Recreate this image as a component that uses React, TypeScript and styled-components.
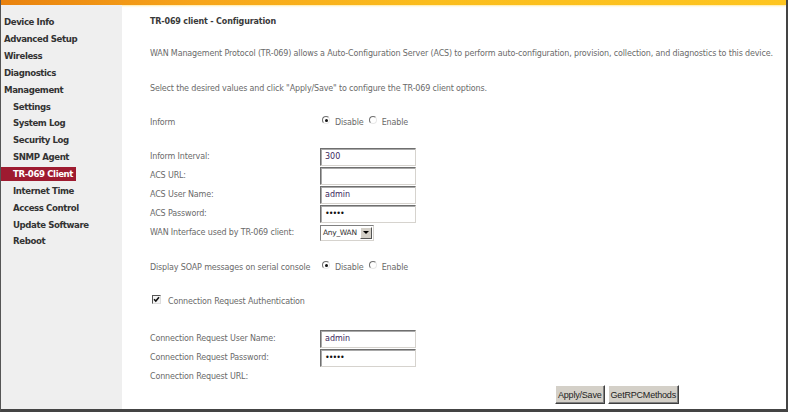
import React from 'react'
import styled, { createGlobalStyle } from 'styled-components'

const Global = createGlobalStyle`
  html, body {
    margin: 0;
    padding: 0;
    background: #fff;
  }
  * {
    box-sizing: border-box;
  }
`

const Frame = styled.div`
  width: 788px;
  height: 412px;
  display: flex;
  flex-direction: column;
  border-left: 1px solid #555;
  border-right: 2px solid #444;
  border-bottom: 3px solid #444;
  overflow: hidden;
  font-family: 'DejaVu Sans', Verdana, sans-serif;
`

const TopBar = styled.div`
  height: 5px;
  flex: none;
  background: linear-gradient(to right, #e9820f 0%, #f7a51a 25%, #fbbd1c 55%, #fec51f 100%);
  box-shadow: 0 1px 2px #ffe9a3;
`

const Body = styled.div`
  flex: 1;
  display: flex;
  min-height: 0;
`

const Sidebar = styled.nav`
  width: 121px;
  flex: none;
  background: #efefef;
  padding-top: 9px;
  display: flex;
  flex-direction: column;
`

const NavItem = styled.div<{ $sub?: boolean; $active?: boolean }>`
  height: 16.85px;
  display: flex;
  align-items: center;
  a {
    display: inline-block;
    padding: 0 3px 0 ${(p) => (p.$sub ? 12 : 3)}px;
    font-size: 8.6px;
    font-weight: bold;
    line-height: 14px;
    letter-spacing: -0.4px;
    color: ${(p) => (p.$active ? '#fff' : '#333')};
    background: ${(p) => (p.$active ? '#9e1b30' : 'transparent')};
    text-decoration: none;
    white-space: nowrap;
  }
`

const Content = styled.main`
  flex: 1;
  padding-left: 28px;
  display: flex;
  flex-direction: column;
  font-size: 8px;
  letter-spacing: -0.15px;
  color: #6a6a6a;
`

const Line = styled.div<{ $h: number; $mt: number }>`
  height: ${(p) => p.$h}px;
  margin-top: ${(p) => p.$mt}px;
  display: flex;
  align-items: center;
  white-space: nowrap;
`

const Title = styled.span`
  font-weight: bold;
  color: #3a3a3a;
`

const Label = styled.span`
  width: 170px;
  flex: none;
`

const Field = styled.input`
  width: 96px;
  height: 18px;
  padding: 0 4px;
  font-family: 'DejaVu Sans', Verdana, sans-serif;
  font-size: 8px;
  color: #3a1f5c;
  background: #fff;
  border: 1px solid;
  border-color: #6f6f6f #d6d3ce #d6d3ce #6f6f6f;
  box-shadow: inset 1px 1px 0 #a9a9a9;
  outline: none;
`

const Dots = styled(Field)`
  letter-spacing: -1px;
  font-size: 8px;
  color: #111;
`

const Select = styled.div`
  width: 54px;
  height: 16px;
  display: flex;
  align-items: center;
  border: 1px solid;
  border-color: #808080 #d6d3ce #d6d3ce #808080;
  padding-left: 2px;
  color: #333;
  font-size: 7.5px;
  letter-spacing: -0.3px;
  justify-content: space-between;
`

const Arrow = styled.span`
  width: 12px;
  height: 12px;
  margin-right: 1px;
  background: #d4d0c8;
  border: 1px solid;
  border-color: #fff #555 #555 #fff;
  display: flex;
  align-items: center;
  justify-content: center;
  &::after {
    content: '';
    border-left: 3px solid transparent;
    border-right: 3px solid transparent;
    border-top: 3px solid #000;
  }
`

const Radios = styled.span`
  display: flex;
  align-items: center;
`

const Radio = styled.span<{ $on?: boolean }>`
  width: 8px;
  height: 8px;
  margin: -4px 5px 0 ${(p) => (p.$on ? 2 : 5)}px;
  border-radius: 50%;
  border: 1px solid;
  border-color: #6f6f6f #e8e8e8 #e8e8e8 #6f6f6f;
  display: inline-flex;
  align-items: center;
  justify-content: center;
  &::after {
    content: '';
    width: 3px;
    height: 3px;
    border-radius: 50%;
    background: ${(p) => (p.$on ? '#111' : 'transparent')};
  }
`

const Check = styled.span`
  width: 9px;
  height: 9px;
  margin: -4px 7px 0 2px;
  border: 1px solid;
  border-color: #555 #ddd #ddd #555;
  background: #f4f4f4;
  display: inline-flex;
  align-items: center;
  justify-content: center;
`

const Buttons = styled.div`
  display: flex;
  gap: 3px;
  margin: 0 0 0 405px;
`

const Button = styled.button`
  height: 19px;
  padding: 0 2px;
  font-family: 'Liberation Sans', Arial, sans-serif;
  font-size: 9px;
  letter-spacing: -0.2px;
  color: #222;
  background: #d4d0c8;
  border: 1px solid;
  border-color: #fff #404040 #404040 #fff;
  box-shadow: inset -1px -1px 0 #808080;
`

const nav = [
  { t: 'Device Info' },
  { t: 'Advanced Setup' },
  { t: 'Wireless' },
  { t: 'Diagnostics' },
  { t: 'Management' },
  { t: 'Settings', sub: true },
  { t: 'System Log', sub: true },
  { t: 'Security Log', sub: true },
  { t: 'SNMP Agent', sub: true },
  { t: 'TR-069 Client', sub: true, active: true },
  { t: 'Internet Time', sub: true },
  { t: 'Access Control', sub: true },
  { t: 'Update Software', sub: true },
  { t: 'Reboot', sub: true },
]

const RadioPair = () => (
  <Radios>
    <Radio $on />
    Disable
    <Radio />
    Enable
  </Radios>
)

export default function App() {
  return (
    <>
      <Global />
      <Frame>
        <TopBar />
        <Body>
          <Sidebar>
            {nav.map((n) => (
              <NavItem key={n.t} $sub={n.sub} $active={n.active}>
                <a href="#">{n.t}</a>
              </NavItem>
            ))}
          </Sidebar>
          <Content>
            <Line $h={20} $mt={6}>
              <Title>TR-069 client - Configuration</Title>
            </Line>
            <Line $h={20} $mt={12}>
              WAN Management Protocol (TR-069) allows a Auto-Configuration Server (ACS) to perform auto-configuration, provision, collection, and diagnostics to this device.
            </Line>
            <Line $h={20} $mt={15}>
              Select the desired values and click "Apply/Save" to configure the TR-069 client options.
            </Line>
            <Line $h={20} $mt={14}>
              <Label>Inform</Label>
              <RadioPair />
            </Line>
            <Line $h={19} $mt={15}>
              <Label>Inform Interval:</Label>
              <Field defaultValue="300" />
            </Line>
            <Line $h={19} $mt={0}>
              <Label>ACS URL:</Label>
              <Field defaultValue="" />
            </Line>
            <Line $h={19} $mt={0}>
              <Label>ACS User Name:</Label>
              <Field defaultValue="admin" />
            </Line>
            <Line $h={19} $mt={0}>
              <Label>ACS Password:</Label>
              <Dots type="password" defaultValue="admin" />
            </Line>
            <Line $h={19} $mt={0}>
              <Label>WAN Interface used by TR-069 client:</Label>
              <Select>
                Any_WAN
                <Arrow />
              </Select>
            </Line>
            <Line $h={20} $mt={15}>
              <Label>Display SOAP messages on serial console</Label>
              <RadioPair />
            </Line>
            <Line $h={20} $mt={14}>
              <Check>
                <svg width="7" height="7" viewBox="0 0 7 7">
                  <path d="M1 3.2 L2.8 5 L6 1.2" stroke="#111" strokeWidth="1.6" fill="none" />
                </svg>
              </Check>
              Connection Request Authentication
            </Line>
            <Line $h={19} $mt={18}>
              <Label>Connection Request User Name:</Label>
              <Field defaultValue="admin" />
            </Line>
            <Line $h={19} $mt={0}>
              <Label>Connection Request Password:</Label>
              <Dots type="password" defaultValue="admin" />
            </Line>
            <Line $h={18} $mt={0}>
              <Label>Connection Request URL:</Label>
            </Line>
            <Buttons>
              <Button>Apply/Save</Button>
              <Button>GetRPCMethods</Button>
            </Buttons>
          </Content>
        </Body>
      </Frame>
    </>
  )
}
